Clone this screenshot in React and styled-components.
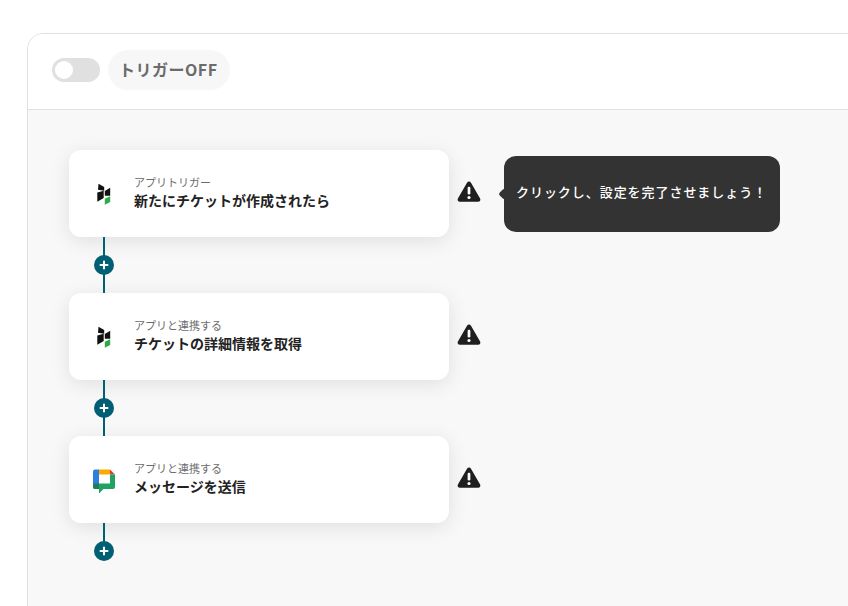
import React from "react";
import styled, { createGlobalStyle } from "styled-components";

const GlobalStyle = createGlobalStyle`
  html, body {
    margin: 0;
    padding: 0;
    width: 848px;
    height: 606px;
    overflow: hidden;
    background: #fff;
    font-family: "Noto Sans CJK JP", "Noto Sans", sans-serif;
  }
`;

const steps = [
  { id: 1, label: "アプリトリガー", title: "新たにチケットが作成されたら", app: "ticket", hint: true },
  { id: 2, label: "アプリと連携する", title: "チケットの詳細情報を取得", app: "ticket" },
  { id: 3, label: "アプリと連携する", title: "メッセージを送信", app: "chat", last: true },
];

const TicketLogo = () => (
  <svg width="40" height="40" viewBox="0 0 40 40">
    <polygon points="13.500,9.800 19.200,13 19.200,16.800 13,15.800" fill="#111" />
    <polygon points="25.200,13.800 25.200,21.800 19.800,21.800 19.800,17" fill="#111" />
    <polygon points="18.700,16.800 18.700,24 12.300,27.800 12.300,18.500" fill="#111" />
    <polygon points="25.200,22.200 25.200,28 19.800,30.800 19.800,24.800" fill="#2eaa4a" />
  </svg>
);

const ChatLogo = () => (
  <svg width="40" height="40" viewBox="0 0 40 40">
    <path d="M8 11.500a2 2 0 0 1 2-2h4v5h0v9h0v5.500h-4a2 2 0 0 1-2-2z" fill="#2f7de1" />
    <path d="M14 9.500h11v5H14z" fill="#f9ab00" />
    <path d="M25 9.500l5 5h-5z" fill="#e53935" />
    <path d="M14 23.500h11v-9h5v12.500a2 2 0 0 1-2 2H18.500L14 33.500z" fill="#1ea362" />
    <path d="M8 23.500h6v5.500h-4a2 2 0 0 1-2-2z" fill="#1a7f5a" />
  </svg>
);

const WarningIcon = () => (
  <svg width="24" height="22" viewBox="1 1 22 21">
    <path d="M12 1.500c.8 0 1.500.4 1.900 1.100l8.700 15c.8 1.400-.2 3.100-1.900 3.100H3.300c-1.700 0-2.700-1.700-1.900-3.100l8.700-15c.4-.7 1.100-1.100 1.900-1.100z" fill="#1f1f1f" />
    <rect x="10.700" y="6.500" width="2.600" height="7.500" rx="1.200" fill="#fff" />
    <circle cx="12" cy="16.800" r="1.500" fill="#fff" />
  </svg>
);

const App = () => (
  <>
    <GlobalStyle />
    <Panel>
      <Header>
        <Toggle>
          <Knob />
        </Toggle>
        <TriggerBadge>トリガーOFF</TriggerBadge>
      </Header>
      <Flow>
        {steps.map((step) => (
          <Step key={step.id}>
            <Row>
              <Card>
                <LogoWrap>{step.app === "chat" ? <ChatLogo /> : <TicketLogo />}</LogoWrap>
                <CardText>
                  <CardLabel>{step.label}</CardLabel>
                  <CardTitle>{step.title}</CardTitle>
                </CardText>
              </Card>
              <WarningWrap>
                <WarningIcon />
              </WarningWrap>
              {step.hint && <Tooltip>クリックし、設定を完了させましょう！</Tooltip>}
            </Row>
            <Connector $last={step.last}>
              <AddButton>
                <svg width="10" height="10" viewBox="0 0 10 10">
                  <path d="M5 1.500v7M1.500 5h7" stroke="#fff" strokeWidth="2" strokeLinecap="round" />
                </svg>
              </AddButton>
            </Connector>
          </Step>
        ))}
      </Flow>
    </Panel>
  </>
);

export default App;

const Panel = styled.div`
  box-sizing: border-box;
  width: 900px;
  height: 640px;
  margin: 33px 0 0 27px;
  border: 1px solid #e0e0e0;
  border-radius: 16px;
  overflow: hidden;
  background: #f8f8f8;
`;

const Header = styled.div`
  box-sizing: border-box;
  height: 76px;
  padding: 16px 24px 20px;
  display: flex;
  align-items: center;
  gap: 8px;
  background: #fff;
  border-bottom: 1px solid #e0e0e0;
`;

const Toggle = styled.div`
  box-sizing: border-box;
  width: 48px;
  height: 24px;
  padding: 3px;
  border-radius: 12px;
  background: #e0e0e0;
`;

const Knob = styled.div`
  width: 18px;
  height: 18px;
  border-radius: 50%;
  background: #fff;
`;

const TriggerBadge = styled.div`
  height: 40px;
  padding: 0 12px 2px 11px;
  box-sizing: border-box;
  display: flex;
  align-items: center;
  border-radius: 20px;
  background: #f7f7f7;
  color: #6b6b6b;
  font-size: 16px;
  font-weight: 700;
  letter-spacing: 0.5px;
`;

const Flow = styled.div`
  padding: 40px 0 0 41px;
  display: flex;
  flex-direction: column;
`;

const Step = styled.div`
  display: flex;
  flex-direction: column;
`;

const Row = styled.div`
  display: flex;
  align-items: center;
`;

const Card = styled.div`
  box-sizing: border-box;
  width: 380px;
  height: 87px;
  padding: 0 16px;
  display: flex;
  align-items: center;
  gap: 9px;
  background: #fff;
  border-radius: 12px;
  box-shadow: 0 4px 20px rgba(0, 0, 0, 0.1);
`;

const LogoWrap = styled.div`
  width: 40px;
  height: 40px;
  flex-shrink: 0;
`;

const CardText = styled.div`
  display: flex;
  flex-direction: column;
  margin-bottom: 3px;
`;

const CardLabel = styled.div`
  font-size: 11px;
  line-height: 16px;
  color: #6b6b6b;
`;

const CardTitle = styled.div`
  font-size: 14px;
  line-height: 20px;
  font-weight: 700;
  color: #222;
`;

const WarningWrap = styled.div`
  margin: 0 0 4px 8px;
  width: 24px;
  height: 22px;
  display: flex;
`;

const Tooltip = styled.div`
  position: relative;
  box-sizing: border-box;
  width: 276px;
  height: 76px;
  margin: 1px 0 0 23px;
  padding: 0 12px 5px;
  display: flex;
  align-items: center;
  border-radius: 12px;
  background: #333;
  color: #fff;
  font-size: 13px;
  font-weight: 500;
  letter-spacing: 0.95px;
  white-space: nowrap;

  &::before {
    content: "";
    position: absolute;
    left: -4px;
    top: 50%;
    margin-top: -4px;
    width: 8px;
    height: 8px;
    border-radius: 2px;
    background: #333;
    transform: rotate(45deg);
  }
`;

const Connector = styled.div`
  position: relative;
  width: 70px;
  height: 56px;
  display: flex;
  align-items: center;
  justify-content: center;

  &::before {
    content: "";
    position: absolute;
    left: 34px;
    top: 0;
    bottom: ${(props) => (props.$last ? "50%" : "0")};
    width: 2px;
    background: #005f73;
  }
`;

const AddButton = styled.div`
  position: relative;
  width: 20px;
  height: 20px;
  border-radius: 50%;
  background: #005f73;
  display: flex;
  align-items: center;
  justify-content: center;
`;
